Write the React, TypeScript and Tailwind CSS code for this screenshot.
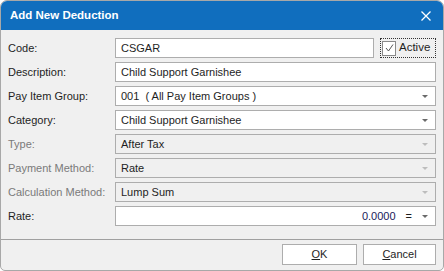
import React from "react"

type Row = {
  label: string
  value: string
  kind: "text" | "select" | "disabled"
}

const rows: Row[] = [
  { label: "Description:", value: "Child Support Garnishee", kind: "text" },
  { label: "Pay Item Group:", value: "001  ( All Pay Item Groups )", kind: "select" },
  { label: "Category:", value: "Child Support Garnishee", kind: "select" },
  { label: "Type:", value: "After Tax", kind: "disabled" },
  { label: "Payment Method:", value: "Rate", kind: "disabled" },
  { label: "Calculation Method:", value: "Lump Sum", kind: "disabled" },
]

function Arrow({ disabled }: { disabled?: boolean }) {
  return (
    <svg width="6" height="3" viewBox="0 0 6 3" className="shrink-0">
      <path d="M0 0h6L3 3z" fill={disabled ? "#bdbdbd" : "#6a6a6a"} />
    </svg>
  )
}

function Field({ row }: { row: Row }) {
  const disabled = row.kind === "disabled"
  return (
    <>
      <span className={`text-[11px] ${disabled ? "text-[#7a7a7a]" : "text-[#1e1e1e]"}`}>{row.label}</span>
      <div
        className={`h-[20px] flex items-center justify-between pl-[5px] pr-[7px] border border-[#adadad] ${
          disabled ? "bg-[#f0f0f0]" : "bg-white"
        }`}
      >
        <span className="text-[11px] text-[#1e1e1e] whitespace-pre">{row.value}</span>
        {row.kind !== "text" && <Arrow disabled={disabled} />}
      </div>
    </>
  )
}

export default function App() {
  return (
    <div className="w-[444px] h-[271px] bg-white" style={{ fontFamily: '"Liberation Sans", Arial, sans-serif' }}>
      <div className="w-[444px] h-[271px] flex flex-col bg-[#f0f0f0] border border-[#a8a8a8] rounded-t-[7px] rounded-b-[5px] overflow-hidden">
        <div className="h-[29px] shrink-0 bg-[#106ebe] flex items-center justify-between pl-[9px] pr-[12px]">
          <span className="text-white font-bold text-[11.5px]">Add New Deduction</span>
          <svg width="10" height="10" viewBox="0 0 10 10">
            <path d="M0.5 0.5l9 9M9.5 0.5l-9 9" stroke="white" strokeWidth="1.3" />
          </svg>
        </div>

        <div className="grid grid-cols-[107px_1fr] items-center gap-y-[4px] pl-[7px] pr-[7px] pt-[8px] pb-[13px] border-b border-[#a0a0a0]">
          <span className="text-[11px] text-[#1e1e1e]">Code:</span>
          <div className="flex items-center gap-[6px]">
            <div className="h-[20px] flex-1 flex items-center pl-[5px] border border-[#adadad] bg-white">
              <span className="text-[11px] text-[#1e1e1e]">CSGAR</span>
            </div>
            <div className="w-[56px] h-[20px] flex items-center gap-[3px] px-[1px] border border-dotted border-[#333]">
              <div className="w-[14px] h-[15px] border border-[#8a8a8a] bg-white flex items-center justify-center">
                <svg width="9" height="8" viewBox="0 0 9 8">
                  <path d="M1 4l2.5 3L8 0.5" stroke="#444" strokeWidth="0.9" fill="none" />
                </svg>
              </div>
              <span className="text-[11.5px] text-[#1e1e1e]">Active</span>
            </div>
          </div>

          {rows.map((r) => (
            <Field key={r.label} row={r} />
          ))}

          <span className="text-[11px] text-[#1e1e1e]">Rate:</span>
          <div className="h-[20px] flex items-center justify-end gap-[10px] pr-[7px] border border-[#adadad] bg-white">
            <span className="text-[11px] text-[#1a1a5a]">0.0000</span>
            <span className="text-[11px] text-[#1e1e1e]">=</span>
            <Arrow />
          </div>
        </div>

        <div className="flex justify-end gap-[6px] pt-[4px] pr-[7px]">
          <button className="w-[75px] h-[21px] border border-[#adadad] bg-white text-[11px] text-[#1e1e1e]">
            <span className="underline">O</span>K
          </button>
          <button className="w-[73px] h-[21px] border border-[#adadad] bg-white text-[11px] text-[#1e1e1e]">
            <span className="underline">C</span>ancel
          </button>
        </div>
      </div>
    </div>
  )
}
